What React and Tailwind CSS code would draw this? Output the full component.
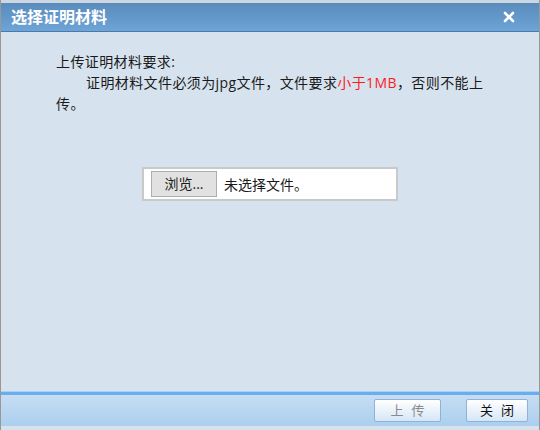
import React from 'react';

const FONT = { fontFamily: '"Microsoft YaHei", "Open Sans", "Noto Sans CJK SC", sans-serif' };

function CloseIcon() {
    return (
        <svg width="12" height="12" viewBox="0 0 12 12" aria-hidden="true">
            <path d="M2 2 L10 10 M10 2 L2 10" stroke="#ffffff" strokeWidth="2.6" strokeLinecap="round" />
        </svg>
    );
}

function FooterButton({ label, disabled, width }) {
    return (
        <button
            className={`${width} h-[23px] border border-[#8fb3d6] rounded-[2px] bg-gradient-to-b from-[#ffffff] to-[#d6e6f6] text-[13px] leading-none tracking-[0.6em] pl-[0.6em] ${disabled ? 'text-[#8a8a8a]' : 'text-[#111111]'}`}
        >
            {label}
        </button>
    );
}

export default function App() {
    return (
        <div className="w-[540px] h-[430px] flex flex-col bg-[#d6e3ef] border-x border-[#9a9896] overflow-hidden" style={FONT}>
            {/* Top strip */}
            <div className="h-[3px] bg-[#cdd7e1]" />

            {/* Title bar */}
            <div className="h-[29px] flex items-center justify-between pl-[10px] pr-[24px] bg-gradient-to-b from-[#5a8bbd] to-[#6ea4d6] border-b border-[#4a7aab]">
                <span className="text-white font-bold text-[16px] leading-none">选择证明材料</span>
                <CloseIcon />
            </div>

            {/* Body */}
            <div className="flex-1 flex flex-col pt-[19px]">
                <div className="pl-[55px] text-[14px] leading-[21px] tracking-[0.4px] text-[#1a1a1a]">
                    <p>上传证明材料要求:</p>
                    <p className="pl-[30px]">
                        证明材料文件必须为jpg文件，文件要求<span className="text-[#ff1a1a]">小于1MB</span>，否则不能上
                    </p>
                    <p>传。</p>
                </div>

                {/* File input */}
                <div className="mt-[53px] mx-auto w-[256px] h-[34px] flex items-center gap-[7px] bg-white border-2 border-[#c9c9c9] pl-[7px]">
                    <button className="w-[66px] h-[26px] bg-[#e1e1e1] border border-[#adadad] text-[14px] leading-none text-[#1a1a1a]">
                        浏览...
                    </button>
                    <span className="text-[14px] text-[#1a1a1a]">未选择文件。</span>
                </div>
            </div>

            {/* Footer */}
            <div className="h-[1px] bg-[#a9d0f5]" />
            <div className="h-[3px] bg-[#68adef]" />
            <div className="h-[31px] flex items-center justify-end gap-[25px] pr-[11px] bg-gradient-to-b from-[#c6ddf2] to-[#abcfee]">
                <FooterButton label="上传" disabled width="w-[67px]" />
                <FooterButton label="关闭" width="w-[62px]" />
            </div>
            <div className="h-[4px] bg-[#d6e3ef]" />
        </div>
    );
}
